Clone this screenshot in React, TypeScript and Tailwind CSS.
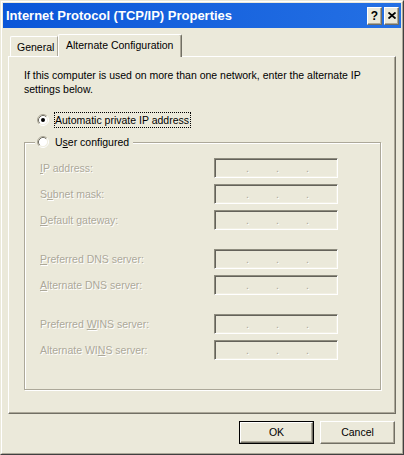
const FONT = "font-['Liberation_Sans',Arial,sans-serif]";
const DISABLED = "text-[#aca899] [text-shadow:1px_1px_0_#ffffff]";

// ─── Small pieces ─────────────────────────────────────────────────────────────

function Radio({ checked }: { checked?: boolean }) {
  return (
    <svg width="12" height="12" viewBox="0 0 12 12" className="shrink-0">
      <circle cx="6" cy="6" r="4.5" fill="#ffffff" />
      <path d="M2.11 9.89 A5.5 5.5 0 0 1 9.89 2.11" fill="none" stroke="#aca899" strokeWidth="1" />
      <path d="M9.89 2.11 A5.5 5.5 0 0 1 2.11 9.89" fill="none" stroke="#ffffff" strokeWidth="1" />
      <path d="M2.82 9.18 A4.5 4.5 0 0 1 9.18 2.82" fill="none" stroke="#716f64" strokeWidth="1" />
      <path d="M9.18 2.82 A4.5 4.5 0 0 1 2.82 9.18" fill="none" stroke="#f1efe2" strokeWidth="1" />
      {checked && <circle cx="6" cy="6" r="2" fill="#000000" />}
    </svg>
  );
}

function IpBox() {
  return (
    <div className="flex h-[20px] w-[124px] border border-[#8e8c7e] border-r-white border-b-white pl-[31px] pt-[2px] text-[10.5px] leading-[14px] shadow-[inset_1px_1px_0_#64625a,inset_-1px_-1px_0_#f1efe2]">
      {[0, 1, 2].map((i) => (
        <span key={i} className={`w-[30px] ${DISABLED}`}>
          .
        </span>
      ))}
    </div>
  );
}

function Field({ pre, key_, post }: { pre: string; key_: string; post: string }) {
  return (
    <div className="flex h-[20px] items-center">
      <span className={`w-[174px] whitespace-nowrap text-[10.5px] leading-[14px] ${DISABLED}`}>
        {pre}
        <span className="underline">{key_}</span>
        {post}
      </span>
      <IpBox />
    </div>
  );
}

function TitleButton({ children }: { children: React.ReactNode }) {
  return (
    <div className="flex h-[18px] w-[15px] items-center justify-center border border-white border-r-[#716f64] border-b-[#716f64] bg-[#ebe9da] shadow-[inset_-1px_-1px_0_#aca899]">
      {children}
    </div>
  );
}

function PushButton({ label, isDefault }: { label: string; isDefault?: boolean }) {
  const face = (
    <div className="flex h-full w-full items-center justify-center border border-white border-r-[#716f64] border-b-[#716f64] text-[10.5px] text-black shadow-[inset_-1px_-1px_0_#aca899]">
      {label}
    </div>
  );
  return (
    <div className={`h-[23px] w-[75px] bg-[#ebe9da] ${isDefault ? 'border border-black' : ''}`}>{face}</div>
  );
}

// ─── App ──────────────────────────────────────────────────────────────────────

export default function App() {
  return (
    <div
      className={`h-[455px] w-[404px] border border-[#ebe9da] border-r-[#404040] border-b-[#404040] bg-[#ebe9da] ${FONT}`}
    >
      <div className="flex h-full flex-col border border-white border-r-[#aca899] border-b-[#aca899] p-[1px]">
        {/* Title bar */}
        <div className="flex h-[25px] shrink-0 items-center bg-gradient-to-r from-[#0a56d8] to-[#2470e4] pl-[3px] pr-[2px]">
          <span className="text-[13px] font-bold leading-none text-white">
            Internet Protocol (TCP/IP) Properties
          </span>
          <div className="ml-auto flex gap-[2px]">
            <TitleButton>
              <span className="text-[12px] font-bold leading-none text-black">?</span>
            </TitleButton>
            <TitleButton>
              <svg width="8" height="7" viewBox="0 0 8 7">
                <path d="M0.5 0.5 L7.5 6.5 M7.5 0.5 L0.5 6.5" stroke="#000" strokeWidth="1.8" />
              </svg>
            </TitleButton>
          </div>
        </div>

        {/* Tabs */}
        <div className="flex h-[28px] shrink-0 items-end pl-[7px] text-[10.5px] leading-[14px] text-black">
          <div className="h-[20px] w-[48px] rounded-tl-[2px] border-t border-l border-white border-r border-r-[#aca899] pt-[3px] pl-[6px]">
            General
          </div>
          <div className="relative z-10 -mb-px h-[23px] w-[124px] rounded-t-[2px] border-t border-l border-white border-r border-r-[#716f64] bg-[#ebe9da] pt-[3px] pl-[7px] shadow-[inset_-1px_0_0_#aca899]">
            Alternate Configuration
          </div>
        </div>

        {/* Tab panel */}
        <div className="ml-[5px] flex h-[358px] w-[388px] shrink-0 flex-col border border-white border-r-[#716f64] border-b-[#716f64] pt-[11px] pl-[15px] shadow-[inset_-1px_-1px_0_#aca899]">
          <p className="whitespace-nowrap text-[10.5px] leading-[14px] text-black">
            If this computer is used on more than one network, enter the alternate IP
            <br />
            settings below.
          </p>

          <div className="mt-[16px] flex h-[16px] items-center pl-[13px]">
            <Radio checked />
            <span className="ml-[5px] h-[16px] border border-dotted border-black pr-px text-[10.5px] leading-[14px] text-black">
              Automatic private IP address
            </span>
          </div>

          <fieldset className="mt-[6px] w-[357px] border border-[#aca899] p-0 shadow-[1px_1px_0_#ffffff,inset_1px_1px_0_#ffffff]">
            <legend className="ml-[10px] flex h-[16px] items-center bg-[#ebe9da] px-[2px]">
              <Radio />
              <span className="ml-[6px] pr-[2px] text-[10.5px] leading-[14px] text-black">
                U<span className="underline">s</span>er configured
              </span>
            </legend>

            <div className="flex flex-col pt-[8px] pb-[29px] pl-[15px]">
              <div className="flex flex-col gap-[6px]">
                <Field pre="" key_="I" post="P address:" />
                <Field pre="S" key_="u" post="bnet mask:" />
                <Field pre="" key_="D" post="efault gateway:" />
              </div>
              <div className="mt-[19px] flex flex-col gap-[6px]">
                <Field pre="" key_="P" post="referred DNS server:" />
                <Field pre="" key_="A" post="lternate DNS server:" />
              </div>
              <div className="mt-[19px] flex flex-col gap-[6px]">
                <Field pre="Preferred " key_="W" post="INS server:" />
                <Field pre="Alternate WI" key_="N" post="S server:" />
              </div>
            </div>
          </fieldset>
        </div>

        {/* Buttons */}
        <div className="mt-[7px] flex justify-end gap-[6px] pr-[6px]">
          <PushButton label="OK" isDefault />
          <PushButton label="Cancel" />
        </div>
      </div>
    </div>
  );
}
